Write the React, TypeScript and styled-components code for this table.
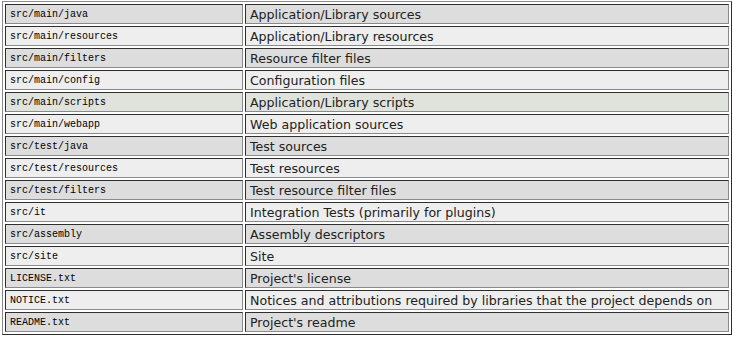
import React from "react";
import styled, { createGlobalStyle } from "styled-components";

const Global = createGlobalStyle`
  html, body { margin: 0; padding: 0; background: #ffffff; }
  body { font-family: "DejaVu Sans", Verdana, sans-serif; }
`;

const Page = styled.div`
  padding: 1px 0 0 2px;
`;

const Table = styled.table`
  width: 730px;
  border-collapse: separate;
  border-spacing: 2px;
  border-style: solid;
  border-width: 1px;
  border-color: #8a8a8a #2e2e2e #2e2e2e #8a8a8a;
  box-sizing: border-box;
`;

const Row = styled.tr<{ $shade: string }>`
  background: ${(p) => p.$shade};
`;

const Cell = styled.td`
  box-sizing: border-box;
  height: 20px;
  padding: 0 4px;
  border-style: solid;
  border-width: 1px;
  border-color: #2e2e2e #8a8a8a #8a8a8a #2e2e2e;
  vertical-align: middle;
  white-space: nowrap;
`;

const PathCell = styled(Cell)`
  width: 238px;
  font-family: "Liberation Mono", "DejaVu Sans Mono", monospace;
  font-size: 10px;
  color: #000;
`;

const DescCell = styled(Cell)`
  font-family: "DejaVu Sans", Verdana, sans-serif;
  font-size: 12.6px;
  color: #222;
`;

const rows: [string, string][] = [
  ["src/main/java", "Application/Library sources"],
  ["src/main/resources", "Application/Library resources"],
  ["src/main/filters", "Resource filter files"],
  ["src/main/config", "Configuration files"],
  ["src/main/scripts", "Application/Library scripts"],
  ["src/main/webapp", "Web application sources"],
  ["src/test/java", "Test sources"],
  ["src/test/resources", "Test resources"],
  ["src/test/filters", "Test resource filter files"],
  ["src/it", "Integration Tests (primarily for plugins)"],
  ["src/assembly", "Assembly descriptors"],
  ["src/site", "Site"],
  ["LICENSE.txt", "Project's license"],
  ["NOTICE.txt", "Notices and attributions required by libraries that the project depends on"],
  ["README.txt", "Project's readme"],
];

export default function App() {
  return (
    <>
      <Global />
      <Page>
        <Table>
          <tbody>
            {rows.map(([path, desc], i) => (
              <Row
                key={path}
                $shade={i === 4 ? "#e0e3dc" : i % 2 === 0 ? "#dddddd" : "#eeeeee"}
              >
                <PathCell>{path}</PathCell>
                <DescCell>{desc}</DescCell>
              </Row>
            ))}
          </tbody>
        </Table>
      </Page>
    </>
  );
}
